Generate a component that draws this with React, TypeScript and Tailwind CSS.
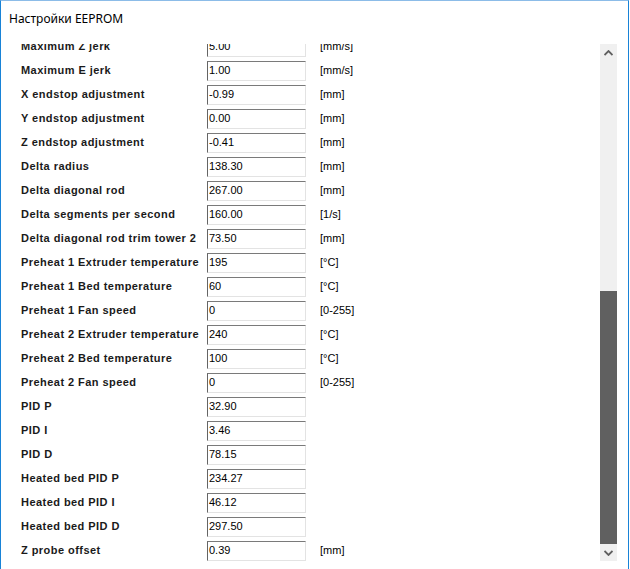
import React from 'react';

interface EepromRow {
  label: string;
  value: string;
  unit?: string;
}

const ROWS: EepromRow[] = [
  { label: 'Maximum Z jerk', value: '5.00', unit: '[mm/s]' },
  { label: 'Maximum E jerk', value: '1.00', unit: '[mm/s]' },
  { label: 'X endstop adjustment', value: '-0.99', unit: '[mm]' },
  { label: 'Y endstop adjustment', value: '0.00', unit: '[mm]' },
  { label: 'Z endstop adjustment', value: '-0.41', unit: '[mm]' },
  { label: 'Delta radius', value: '138.30', unit: '[mm]' },
  { label: 'Delta diagonal rod', value: '267.00', unit: '[mm]' },
  { label: 'Delta segments per second', value: '160.00', unit: '[1/s]' },
  { label: 'Delta diagonal rod trim tower 2', value: '73.50', unit: '[mm]' },
  { label: 'Preheat 1 Extruder temperature', value: '195', unit: '[°C]' },
  { label: 'Preheat 1 Bed temperature', value: '60', unit: '[°C]' },
  { label: 'Preheat 1 Fan speed', value: '0', unit: '[0-255]' },
  { label: 'Preheat 2 Extruder temperature', value: '240', unit: '[°C]' },
  { label: 'Preheat 2 Bed temperature', value: '100', unit: '[°C]' },
  { label: 'Preheat 2 Fan speed', value: '0', unit: '[0-255]' },
  { label: 'PID P', value: '32.90' },
  { label: 'PID I', value: '3.46' },
  { label: 'PID D', value: '78.15' },
  { label: 'Heated bed PID P', value: '234.27' },
  { label: 'Heated bed PID I', value: '46.12' },
  { label: 'Heated bed PID D', value: '297.50' },
  { label: 'Z probe offset', value: '0.39', unit: '[mm]' },
];

const Chevron: React.FC<{ down?: boolean }> = ({ down }) => (
  <svg width="9" height="6" viewBox="0 0 9 6" className={down ? 'rotate-180' : ''}>
    <path d="M0.5 5 L4.5 1 L8.5 5" fill="none" stroke="#606060" strokeWidth="1.8" />
  </svg>
);

const Row: React.FC<{ row: EepromRow }> = ({ row }) => (
  <div className="flex h-[24px] items-center">
    <div className="w-[206px] shrink-0 pb-[2px] pl-[20px] text-[11px] font-bold tracking-[0.45px] text-[#1a1a1a]">
      {row.label}
    </div>
    <div className="flex h-[20px] w-[99px] shrink-0 items-center border border-t-[#7a7a7a] border-l-[#646464] border-r-[#e3e3e3] border-b-[#e3e3e3] bg-white pb-[1px] pl-[1px] text-[11px] text-black">
      {row.value}
    </div>
    {row.unit && <div className="pb-[2px] pl-[14px] text-[11px] text-black">{row.unit}</div>}
  </div>
);

export default function App() {
  return (
    <div
      className="flex h-[569px] w-[629px] flex-col border-l border-r border-t border-l-[#1883d7] border-r-[#1883d7] border-t-[#8cbce8] bg-white"
      style={{ fontFamily: '"Liberation Sans", Arial, sans-serif' }}
    >
      <div
        className="h-[43px] shrink-0 pl-[8px] pt-[10px] text-[12px] leading-[16px] text-black"
        style={{ fontFamily: '"Noto Sans", "Liberation Sans", sans-serif' }}
      >
        Настройки EEPROM
      </div>
      <div className="flex min-h-0 flex-1">
        <div className="w-[599px] shrink-0 overflow-hidden">
          <div className="-mt-[9px]">
            {ROWS.map((r) => (
              <Row key={r.label} row={r} />
            ))}
          </div>
        </div>
        <div className="flex h-[517px] w-[17px] shrink-0 flex-col bg-[#f0f0f0]">
          <div className="flex h-[17px] items-center justify-center">
            <Chevron />
          </div>
          <div className="flex flex-1 flex-col justify-end">
            <div className="h-[253px] bg-[#606060]" />
          </div>
          <div className="flex h-[17px] items-center justify-center">
            <Chevron down />
          </div>
        </div>
      </div>
    </div>
  );
}
